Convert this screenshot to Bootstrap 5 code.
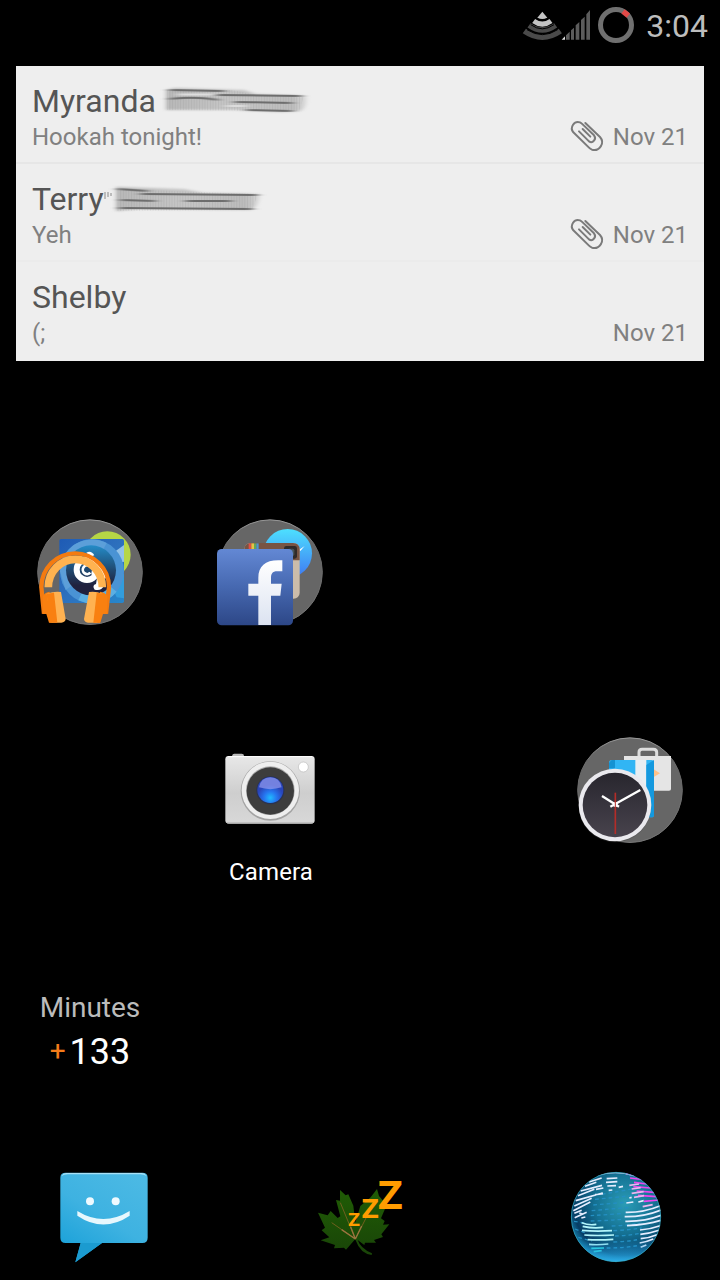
<!DOCTYPE html>
<html lang="en">
<head>
<meta charset="utf-8">
<meta name="viewport" content="width=device-width, initial-scale=1">
<title>Home screen</title>
<link rel="stylesheet" href="https://cdn.jsdelivr.net/npm/bootstrap@5.3.0/dist/css/bootstrap.min.css">
<style>
body{background:#000;font-family:Roboto,"Noto Sans",sans-serif;width:720px;height:1280px;overflow:hidden}
svg{display:block;flex:none;overflow:visible}
.phone{height:1280px}
.status{height:50px;padding-right:12px}
.clock{font-size:32px;line-height:38px;color:#bdbdbd;margin-left:6px;margin-top:1px}
.inbox{margin:16px 16px 0;background:#eee;height:295px}
.msg{height:98px;padding:16px 16px 0;border-bottom:2px solid #e6e6e6}
.msg+.msg{border-bottom-color:#ebebeb}
.msg:last-child{border:0}
.who{font-size:32px;line-height:38px;color:#555}
.what{font-size:24px;line-height:28px;color:#808080;margin-top:3px}
.workspace{display:grid;grid-template-columns:repeat(4,180px);grid-template-rows:repeat(3,218px);margin-top:102px}
.cell{padding-top:47px}
.c2{grid-column:2}.c4{grid-column:4}.r2{grid-row:2}.r3{grid-row:3}
.app{font-size:24px;line-height:28px;color:#fff;margin-top:5px;padding-left:2px;letter-spacing:.1px}
.minutes{grid-row:3;padding-top:92px;color:#bbb;font-size:28px;line-height:33px}
.total{font-size:36px;line-height:42px;color:#fff;margin-top:7px}
.plus{font-size:28px;color:#f57c1a;margin-right:4px;margin-top:-2px}
.dock{display:grid;grid-template-columns:repeat(5,128px);padding:43px 40px 0}
.d3{grid-column:3;padding-top:10px}.d5{grid-column:5}
</style>
<script src="https://cdn.jsdelivr.net/npm/bootstrap@5.3.0/dist/js/bootstrap.bundle.min.js"></script>
</head>
<body>
<svg width="0" height="0" class="position-absolute">
<defs>
<linearGradient id="rim" x2="0" y2="1"><stop stop-color="#999"/><stop offset=".3" stop-color="#666"/><stop offset="1" stop-color="#777"/></linearGradient>
<filter id="soft" x="-10%" y="-20%" width="120%" height="140%"><feGaussianBlur stdDeviation="2 .8"/></filter>
<filter id="streak" x="-10" y="-10" width="190" height="50" filterUnits="userSpaceOnUse"><feGaussianBlur stdDeviation="4 .6"/></filter>
<linearGradient id="smear"><stop stop-color="#b8b8b8"/><stop offset=".45" stop-color="#c6c6c6"/><stop offset=".9" stop-color="#bcbcbc"/><stop offset="1" stop-color="#dadada"/></linearGradient>
<pattern id="ribs" width="2.7" height="30" patternUnits="userSpaceOnUse"><path d="M.5 0V30" stroke="#888" stroke-opacity=".25"/></pattern>
<g id="disc"><circle cx="180" cy="186.500" r="157" fill="#666" stroke="url(#rim)" stroke-width="3"/></g>
<g id="clip" fill="none" stroke="#7a7a7a" stroke-width="6" stroke-linecap="round" stroke-linejoin="round"><path d="M136 69 180 111C196 129 178 155 156 149Q151 147 147 143L100 97C88 82 103 61 120 67Q124 69 128 73L162 106C171 117 158 132 147 124L117 94M128 87 151 110"/></g>
</defs>
</svg>
<main class="phone d-flex flex-column">
<header class="status d-flex align-items-center justify-content-end">
<svg width="120" height="50" viewBox="30 0 360 150">
<g fill="none" stroke="#4a4a4a" stroke-width="17"><path d="M43 93Q97 130 151 93"/><path d="M57 76Q97 104 137 76" stroke-width="16"/></g>
<path d="M97 35 112 53Q97 61 82 53Z" fill="#c4c4c4"/><path d="M71 63Q97 82 123 63" fill="none" stroke="#c4c4c4" stroke-width="15"/><path d="M62 74Q97 99 132 74M51 89Q97 119 143 89M79 56Q97 65 115 56" fill="none" stroke="#000" stroke-width="3"/>
<path d="M155 119 165 109V119Z" fill="#ddd"/><path d="M168 119V106L179 95V119ZM183 119V91L192 83V119ZM197 119V76L208 66V119ZM213 119V60L224 50V119ZM229 119V43L240 30V119Z" fill="#5c5c5c"/>
<circle cx="318" cy="75" r="46.500" fill="none" stroke="#707070" stroke-width="15"/><path d="M339 34 355 47" fill="none" stroke="#e24a48" stroke-width="16"/>
</svg>
<span class="clock">3:04</span>
</header>
<section class="inbox">
<article class="msg">
<div class="d-flex align-items-center"><span class="who">Myranda</span>
<svg width="150" height="30" viewBox="0 0 150 30" style="margin-left:8px"><g filter="url(#soft)"><path d="M2 4 11 2 80 4 92 8 142 10Q144 22 136 25L115 26 70 24 2 24Z" fill="url(#smear)"/></g><path d="M3 4 68 4 92 9 140 11 135 25 3 24Z" fill="url(#ribs)" opacity=".7"/><g filter="url(#streak)" stroke="#6d6d6d" stroke-width="2" fill="none"><path d="M6 4 60 5M6 13Q32 10 54 14M71 16 128 17M83 24 128 25M52 9 137 10"/></g><path d="M14 8.500H50M62 20H82" stroke="#ddd" stroke-width="2" filter="url(#streak)"/></svg></div>
<div class="d-flex"><span class="what">Hookah tonight!</span><svg class="ms-auto" width="34" height="32" viewBox="90 60 102 96"><use href="#clip"/></svg><span class="what" style="margin-left:9px">Nov 21</span></div>
</article>
<article class="msg">
<div class="d-flex align-items-center"><span class="who">Terry</span>
<svg width="162" height="30" viewBox="0 0 162 30"><g filter="url(#soft)"><path d="M12 3 80 5 100 9 156 10Q155 23 147 26L34 25 12 27Z" fill="url(#smear)"/></g><path d="M1 8V15M4 8V13M7 9V12" stroke="#aaa" stroke-width="1.500"/><path d="M12 5 154 10 148 26 12 27Z" fill="url(#ribs)" opacity=".7"/><g filter="url(#streak)" stroke="#6d6d6d" stroke-width="2"><path d="M14 5 43 7M17 16 51 17M82 17 127 17M16 24 148 25M37 10 153 11"/></g></svg></div>
<div class="d-flex"><span class="what">Yeh</span><svg class="ms-auto" width="34" height="32" viewBox="90 60 102 96"><use href="#clip"/></svg><span class="what" style="margin-left:9px">Nov 21</span></div>
</article>
<article class="msg">
<div class="who">Shelby</div>
<div class="d-flex justify-content-between"><span class="what">(;</span><span class="what">Nov 21</span></div>
</article>
</section>
<section class="workspace">
<div class="cell d-flex justify-content-center align-items-start">
<svg width="120" height="125" viewBox="0 0 360 375">
<defs><linearGradient id="eye" x2="0" y2="1"><stop stop-color="#248cc8"/><stop offset=".5" stop-color="#20486f"/><stop offset=".8" stop-color="#20213e"/></linearGradient><linearGradient id="sq" x2="1" y2="1"><stop stop-color="#1e5bb5"/><stop offset=".5" stop-color="#2d70bd"/><stop offset="1" stop-color="#2787cb"/></linearGradient></defs>
<use href="#disc"/>
<circle cx="232" cy="134" r="70" fill="#b6d645"/>
<rect x="88" y="87" width="194" height="192" rx="5" fill="url(#sq)"/>
<path d="M253 126 282 105V155L265 160Z" fill="#93c2e8"/><path d="M248 236 282 190V265L260 262Z" fill="#329ddd"/>
<circle cx="186" cy="184" r="96" fill="#4a93d4"/><path d="M90 184A96 96 0 0 1 230 99L186 184 107 240Z" fill="#5c9fd9"/><path d="M145 271A96 96 0 0 0 260 245L186 184Z" fill="#5bafe3"/>
<circle cx="183" cy="181" r="75" fill="url(#eye)"/>
<path d="M169 128Q184 120 193 136L180 140Z" fill="#fff"/>
<circle cx="171" cy="179" r="31" fill="none" stroke="#fff" stroke-width="18"/><path d="M178 168A13 13 0 1 0 181 188" fill="none" stroke="#fff" stroke-width="8"/><circle cx="175" cy="178" r="8" fill="#20486f"/>
<path d="M190 160Q223 165 229 205L213 206 221 228Q214 244 194 239 185 226 198 222L201 204Q185 205 184 190Z" fill="#fff"/>
<path d="M55 232A81 84 0 0 1 217 232" fill="none" stroke="#ffb350" stroke-width="23"/>
<path d="M42 311 34 232A101.500 102 0 0 1 237 232L228 311" fill="none" stroke="#f47b10" stroke-width="13"/>
<path d="M39 258Q46 246 59 245L67 338H57L49 312H39ZM232 258Q224 246 210 245L194 338H211L219 312H231Z" fill="#f98010"/>
<path d="M50 251Q73 243 93 246L107 327Q106 337 94 338H65ZM217 251Q198 243 177 246L162 327Q163 337 174 338H202Z" fill="#ffb251"/>
<path d="M50 251 72 248 82 338H59ZM200 248 224 252 210 338H190Z" fill="#f98010"/>
</svg></div>
<div class="cell c2 d-flex justify-content-center align-items-start">
<svg width="120" height="125" viewBox="0 0 360 375">
<defs><linearGradient id="fb" x2="0" y2="1"><stop stop-color="#6388d4"/><stop offset=".5" stop-color="#4668b0"/><stop offset="1" stop-color="#2d4787"/></linearGradient><linearGradient id="ms" x2="0" y2="1"><stop stop-color="#4de0ff"/><stop offset="1" stop-color="#3f79f2"/></linearGradient><linearGradient id="fg" x2="0" y2="1"><stop stop-color="#fff"/><stop offset="1" stop-color="#dce3f1"/></linearGradient></defs>
<use href="#disc"/><circle cx="233" cy="130" r="73" fill="url(#ms)"/><path d="M258 126 284 108 271 123 263 120Z" fill="#fff"/>
<rect x="103" y="99" width="166" height="167" rx="18" fill="#cbbcaa"/><path d="M103 151V119Q103 99 123 99H249Q269 99 269 119V151Z" fill="#785444"/>
<path d="M116 100h8v18h-8Z" fill="#e25045"/><path d="M124 100h8v18h-8Z" fill="#e4c346"/><path d="M132 100h7v18h-7Z" fill="#64a758"/><path d="M139 100h7v18h-7Z" fill="#4d96cf"/>
<rect x="222" y="108" width="39" height="38" rx="7" fill="#302a29"/><rect x="232" y="116" width="21" height="22" rx="5" fill="#46545b"/>
<rect x="21" y="117" width="228" height="229" rx="14" fill="url(#fb)"/>
<path d="M145 345V257H115V221H145V203C145 165 170 147 217 151V184H202C186 184 183 192 183 205V221H215L211 257H183V345Z" fill="url(#fg)"/>
</svg></div>
<div class="cell c2 r2 d-flex flex-column align-items-center">
<svg width="120" height="125" viewBox="-15 -36 360 375">
<defs><linearGradient id="body" x2="0" y2="1"><stop stop-color="#e8e8e8"/><stop offset=".55" stop-color="#cecece"/><stop offset="1" stop-color="#d8d8d8"/></linearGradient><radialGradient id="lens" cx=".5" cy=".8"><stop stop-color="#20baff"/><stop offset=".5" stop-color="#2674ef"/><stop offset="1" stop-color="#2945ba"/></radialGradient></defs>
<path d="M52 52V46Q52 41 58 41H80Q87 41 87 47V52Z" fill="#bbb"/><rect x="31" y="48" width="268" height="203" rx="10" fill="url(#body)"/><path d="M38 50H292" stroke="#fff" stroke-width="3"/><path d="M36 249H294" stroke="#aaa" stroke-width="3"/>
<circle cx="166" cy="153" r="89" fill="#a3a3a3"/><circle cx="166" cy="151" r="86" fill="#eee"/><circle cx="166" cy="152" r="73" fill="#aaa"/><circle cx="166" cy="153" r="71" fill="#3d3d3d"/><circle cx="166" cy="151" r="42" fill="#293253"/><circle cx="166" cy="150" r="39" fill="url(#lens)"/><path d="M132 142Q138 112 166 112T200 142Q166 153 132 142Z" fill="#9ba1f3" opacity=".65"/>
<circle cx="265" cy="81" r="15" fill="#fff" stroke="#bbb" stroke-width="2"/>
</svg><div class="app">Camera</div></div>
<div class="cell c4 r2 d-flex justify-content-center align-items-start">
<svg width="120" height="125" viewBox="0 -6 360 375">
<defs><linearGradient id="face" x2="0" y2="1"><stop stop-color="#28262e"/><stop offset="1" stop-color="#48434d"/></linearGradient></defs>
<use href="#disc" y="-6"/>
<path d="M207 81V67Q207 58 216 58H250Q260 58 260 67V81" fill="none" stroke="#ddd" stroke-width="9"/><path d="M162 78H303V177Q303 182 297 182H162Z" fill="#e5e5e5"/><path d="M250 117 270 130 250 142Z" fill="#ffc28a"/>
<path d="M117 98Q117 90 125 90H244Q252 90 252 98V255Q252 262 244 262H117Z" fill="#31b5f4"/><path d="M117 98 125 90H135V115H117Z" fill="#1592d2"/><path d="M196 90H229V230H196Z" fill="#e8eef2"/><path d="M229 105 252 90V255Q252 262 244 262H229Z" fill="#1499df"/>
<circle cx="135" cy="228" r="109" fill="#444" opacity=".35"/><circle cx="135" cy="225" r="109" fill="#eae9ee"/><circle cx="135" cy="225" r="97" fill="url(#face)"/>
<path d="M136 188V312" stroke="#b32d29" stroke-width="5"/><path d="M96 198 147 230M121 230 211 180" stroke="#fff" stroke-width="7"/><circle cx="136" cy="224" r="7" fill="#fff"/><path d="M136 215V235" stroke="#b32d29" stroke-width="3"/>
</svg></div>
<div class="minutes d-flex flex-column align-items-center"><div>Minutes</div><div class="total d-flex align-items-center"><span class="plus">+</span><span>133</span></div></div>
</section>
<nav class="dock">
<div class="d-flex justify-content-center align-items-start">
<svg width="110" height="110" viewBox="-2 1 330 330"><defs><linearGradient id="sms" x1=".8" y1="0" x2=".2" y2="1"><stop stop-color="#4bb9e4"/><stop offset=".5" stop-color="#3eb2e1"/><stop offset="1" stop-color="#18a0d8"/></linearGradient></defs>
<path d="M48 39H278Q294 39 294 54V234Q294 250 278 250H157L77 308 93 250H48Q32 250 32 234V54Q32 39 48 39Z" fill="url(#sms)"/><path d="M36 49Q40 40 51 40H275Q286 40 290 49Q283 44 272 44H54Q43 44 36 49Z" fill="#a8e0f5"/><path d="M93 250H157L77 308Z" fill="#1b9bd0"/>
<circle cx="121" cy="125" r="12" fill="#effaff"/><circle cx="198" cy="125" r="12" fill="#effaff"/><path d="M83 154Q161 202 240 154V168Q161 221 83 168Z" fill="#e7f7fd"/></svg></div>
<div class="d3 d-flex justify-content-center align-items-start">
<svg width="100" height="95" viewBox="0 0 300 285"><defs><linearGradient id="leaf" x2="0" y2="1"><stop stop-color="#205d05"/><stop offset="1" stop-color="#194408"/></linearGradient></defs>
<path d="M136 207 108 239 102 233 72 235 75 225 32 211 58 202 35 181 45 173 24 128 53 136 62 123 83 144 91 139 78 90 90 92 90 60 107 76 115 73 130 107 136 158 151 108 182 82 201 57 207 78 230 105 213 145 224 153 219 164 238 163 214 193 219 201 192 210 198 218 165 218 163 225 143 210Q151 235 186 250L185 255Q151 251 137 211Z" fill="url(#leaf)"/>
<path d="M136 207 65 158M136 207 91 98M136 207 193 95" stroke="#70601e" stroke-width="3"/><path d="M136 207 95 179M136 207 122 170M136 207 155 168" stroke="#9b7440" stroke-width="4"/>
<g fill="#ff9c00" font-family="Open Sans, sans-serif" font-weight="700"><text x="115" y="167" font-size="54" textLength="35" lengthAdjust="spacingAndGlyphs">Z</text><text x="155" y="144" font-size="82" textLength="51" lengthAdjust="spacingAndGlyphs">Z</text><text x="204" y="117" font-size="117" textLength="74" lengthAdjust="spacingAndGlyphs">Z</text></g></svg></div>
<div class="d5 d-flex justify-content-center align-items-start">
<svg width="110" height="110" viewBox="3 0 330 330"><defs><radialGradient id="sea" cx=".6" cy=".35" r=".68"><stop stop-color="#2a9cb6"/><stop offset=".5" stop-color="#147092"/><stop offset=".85" stop-color="#073d64"/><stop offset="1" stop-color="#1686b5"/></radialGradient><linearGradient id="glow" x2="0" y2="1"><stop offset=".75" stop-color="#1a8fd0" stop-opacity="0"/><stop offset="1" stop-color="#2daee8"/></linearGradient><clipPath id="ball"><circle cx="168" cy="171" r="135"/></clipPath></defs>
<g clip-path="url(#ball)"><circle cx="168" cy="171" r="135" fill="url(#sea)"/>
<g stroke="#248fc2" stroke-width="4" stroke-dasharray="11 9" fill="none"><path d="M125 103Q180 94 220 86M105 118Q170 112 230 105M100 135Q160 130 220 125M95 152Q150 147 205 143M92 167Q140 164 193 160M92 183Q145 182 193 177M155 198Q200 196 240 190M160 212Q205 210 245 204M165 228Q205 227 242 220M160 246Q202 245 238 238M140 264Q190 264 232 257M42 184 78 190M45 207 80 220M55 232 95 243"/></g>
<g stroke="#e5edff" stroke-width="5" fill="none"><path d="M87 66 125 54M75 79 109 67M62 93 126 76M54 107 103 88M47 122 128 99M43 138 95 115M40 152 91 126M43 160 65 151M44 173 80 157M108 88 130 84M105 104 129 101M58 159 68 162M64 174 76 171M140 56 172 54M138 67 172 65M142 78 168 77M146 91 157 90M176 82 189 79"/>
<path d="M197 157Q250 158 301 137M194 170Q251 171 303 150M196 184Q255 185 303 166M201 197Q260 194 302 181M240 210Q273 207 300 197M241 223Q272 220 297 211M242 236Q267 234 291 224M239 249Q262 245 280 237M242 262 259 255M199 129 220 126M208 114 215 112M235 126 251 122"/></g>
<g stroke="#b2f5fa" stroke-width="5" fill="none"><path d="M65 188Q87 197 109 193M68 199Q100 206 130 202M66 211Q105 215 156 212M73 225Q110 228 162 225M83 239Q120 241 160 238M87 253Q111 256 145 252"/><path stroke="#2de5e7" d="M94 265 132 264M101 275 125 272"/></g>
<g stroke="#ed43ef" stroke-width="5" fill="none"><path d="M198 41 224 46M210 54 246 58M222 67 260 72M220 80 272 84M230 93 283 97M234 106 290 110M252 124 297 120"/></g><g stroke="#ecb5ef" stroke-width="5" fill="none"><path d="M208 76 237 72M215 87 242 83M215 100 251 95M222 112 252 107M248 140 278 134"/></g>
<path d="M108 47Q167 30 220 47" fill="none" stroke="#b0c4e6" stroke-width="3"/>
<circle cx="168" cy="171" r="135" fill="url(#glow)"/></g><circle cx="168" cy="171" r="134" fill="none" stroke="#36a7bf" stroke-width="3" opacity=".7"/></svg></div>
</nav>
</main>
</body>
</html>
